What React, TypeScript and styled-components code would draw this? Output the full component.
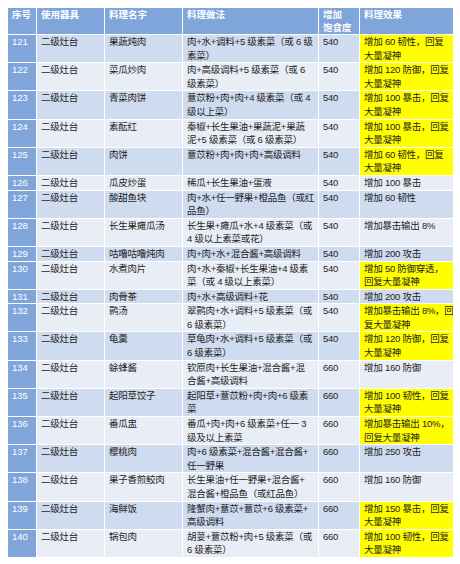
import React from 'react';
import styled, { createGlobalStyle } from 'styled-components';

const GlobalStyle = createGlobalStyle`
  html, body {
    margin: 0;
    padding: 0;
    background: #ffffff;
  }
  body {
    font-family: "Liberation Sans", "Noto Sans CJK SC", sans-serif;
  }
`;

const Page = styled.div`
  padding: 7px;
`;

const Table = styled.table`
  width: 446px;
  table-layout: fixed;
  border-collapse: collapse;
  font-size: 9.5px;
  color: #1e1e1e;
`;

const HeadCell = styled.th`
  background: #7fa5da;
  color: #ffffff;
  font-weight: bold;
  text-align: left;
  vertical-align: top;
  line-height: 13px;
  padding: 0 3px 0 4px;
  border: 1px solid #ffffff;
  white-space: pre;
`;

const Row = styled.tr<{ $alt: boolean }>`
  background: ${(p) => (p.$alt ? '#e8edf6' : '#cfdbee')};
`;

const Cell = styled.td<{ $mark?: boolean }>`
  vertical-align: top;
  line-height: 13.6px;
  letter-spacing: -0.25px;
  padding: 0 1px 0 4px;
  border: 1px solid #ffffff;
  white-space: pre;
  overflow: hidden;
  background: ${(p) => (p.$mark ? '#ffff00' : 'transparent')};
`;

const NumCell = styled(Cell)`
  background: #7fa5da;
  color: #ffffff;
  letter-spacing: 0;
`;

type Dish = [number, string, string, string, string, boolean];

// 序号, 料理名字, 料理做法, 饱食度, 料理效果, 是否标黄
const dishes: Dish[] = [
  [121, '果蔬炖肉', '肉+水+调料+5 级素菜（或 6 级\n素菜）', '540', '增加 60 韧性，回复\n大量凝神', true],
  [122, '菜瓜炒肉', '肉+高级调料+5 级素菜（或 6\n级素菜）', '540', '增加 120 防御，回复\n大量凝神', true],
  [123, '青菜肉饼', '薏苡粉+肉+肉+4 级素菜（或 4\n级以上菜）', '540', '增加 100 暴击，回复\n大量凝神', true],
  [124, '素酝红', '秦椒+长生果油+果蔬泥+果蔬\n泥+5 级素菜（或 6 级素菜）', '540', '增加 100 暴击，回复\n大量凝神', true],
  [125, '肉饼', '薏苡粉+肉+肉+肉+高级调料', '540', '增加 60 韧性，回复\n大量凝神', true],
  [126, '瓜皮炒蛋', '稀瓜+长生果油+蛋液', '540', '增加 100 暴击', false],
  [127, '酸甜鱼块', '肉+水+任一野果+橙品鱼（或红\n品鱼）', '540', '增加 60 韧性', false],
  [128, '长生果瘫瓜汤', '长生果+瘫瓜+水+4 级素菜（或\n4 级以上素菜或花）', '540', '增加暴击输出 8%', false],
  [129, '咕噜咕噜炖肉', '肉+肉+水+混合酱+高级调料', '540', '增加 200 攻击', false],
  [130, '水煮肉片', '肉+水+秦椒+长生果油+4 级素\n菜（或 4 级以上素菜）', '540', '增加 50 防御穿透，\n回复大量凝神', true],
  [131, '肉骨茶', '肉+水+高级调料+花', '540', '增加 200 攻击', false],
  [132, '鹮汤', '翠鹮肉+水+调料+5 级素菜（或\n6 级素菜）', '540', '增加暴击输出 8%，回\n复大量凝神', true],
  [133, '龟羹', '草龟肉+水+调料+5 级素菜（或\n6 级素菜）', '540', '增加 120 防御，回复\n大量凝神', true],
  [134, '蜍蜂酱', '钦原肉+长生果油+混合酱+混\n合酱+高级调料', '660', '增加 160 防御', false],
  [135, '起阳草饺子', '起阳草+薏苡粉+肉+肉+6 级素\n菜', '660', '增加 100 韧性，回复\n大量凝神', true],
  [136, '番瓜盅', '番瓜+肉+肉+6 级素菜+任一 3\n级及以上素菜', '660', '增加暴击输出 10%，\n回复大量凝神', true],
  [137, '樱桃肉', '肉+6 级素菜+混合酱+混合酱+\n任一野果', '660', '增加 250 攻击', false],
  [138, '果子香煎鲛肉', '长生果油+任一野果+混合酱+\n混合酱+橙品鱼（或红品鱼）', '660', '增加 160 防御', false],
  [139, '海鲜饭', '隆蟹肉+薏苡+薏苡+6 级素菜+\n高级调料', '660', '增加 150 暴击，回复\n大量凝神', true],
  [140, '锅包肉', '胡荽+薏苡粉+肉+5 级素菜（或\n6 级素菜）', '660', '增加 100 韧性，回复\n大量凝神', true],
];

function App() {
  return (
    <Page>
      <GlobalStyle />
      <Table>
        <colgroup>
          <col style={{ width: 29 }} />
          <col style={{ width: 68 }} />
          <col style={{ width: 78 }} />
          <col style={{ width: 136 }} />
          <col style={{ width: 41 }} />
          <col style={{ width: 94 }} />
        </colgroup>
        <thead>
          <tr>
            <HeadCell>序号</HeadCell>
            <HeadCell>使用器具</HeadCell>
            <HeadCell>料理名字</HeadCell>
            <HeadCell>料理做法</HeadCell>
            <HeadCell>{'增加\n饱食度'}</HeadCell>
            <HeadCell>料理效果</HeadCell>
          </tr>
        </thead>
        <tbody>
          {dishes.map(([id, name, recipe, sat, effect, mark], i) => (
            <Row key={id} $alt={i % 2 === 1}>
              <NumCell>{id}</NumCell>
              <Cell>二级灶台</Cell>
              <Cell>{name}</Cell>
              <Cell>{recipe}</Cell>
              <Cell>{sat}</Cell>
              <Cell $mark={mark}>{effect}</Cell>
            </Row>
          ))}
        </tbody>
      </Table>
    </Page>
  );
}

export default App;
